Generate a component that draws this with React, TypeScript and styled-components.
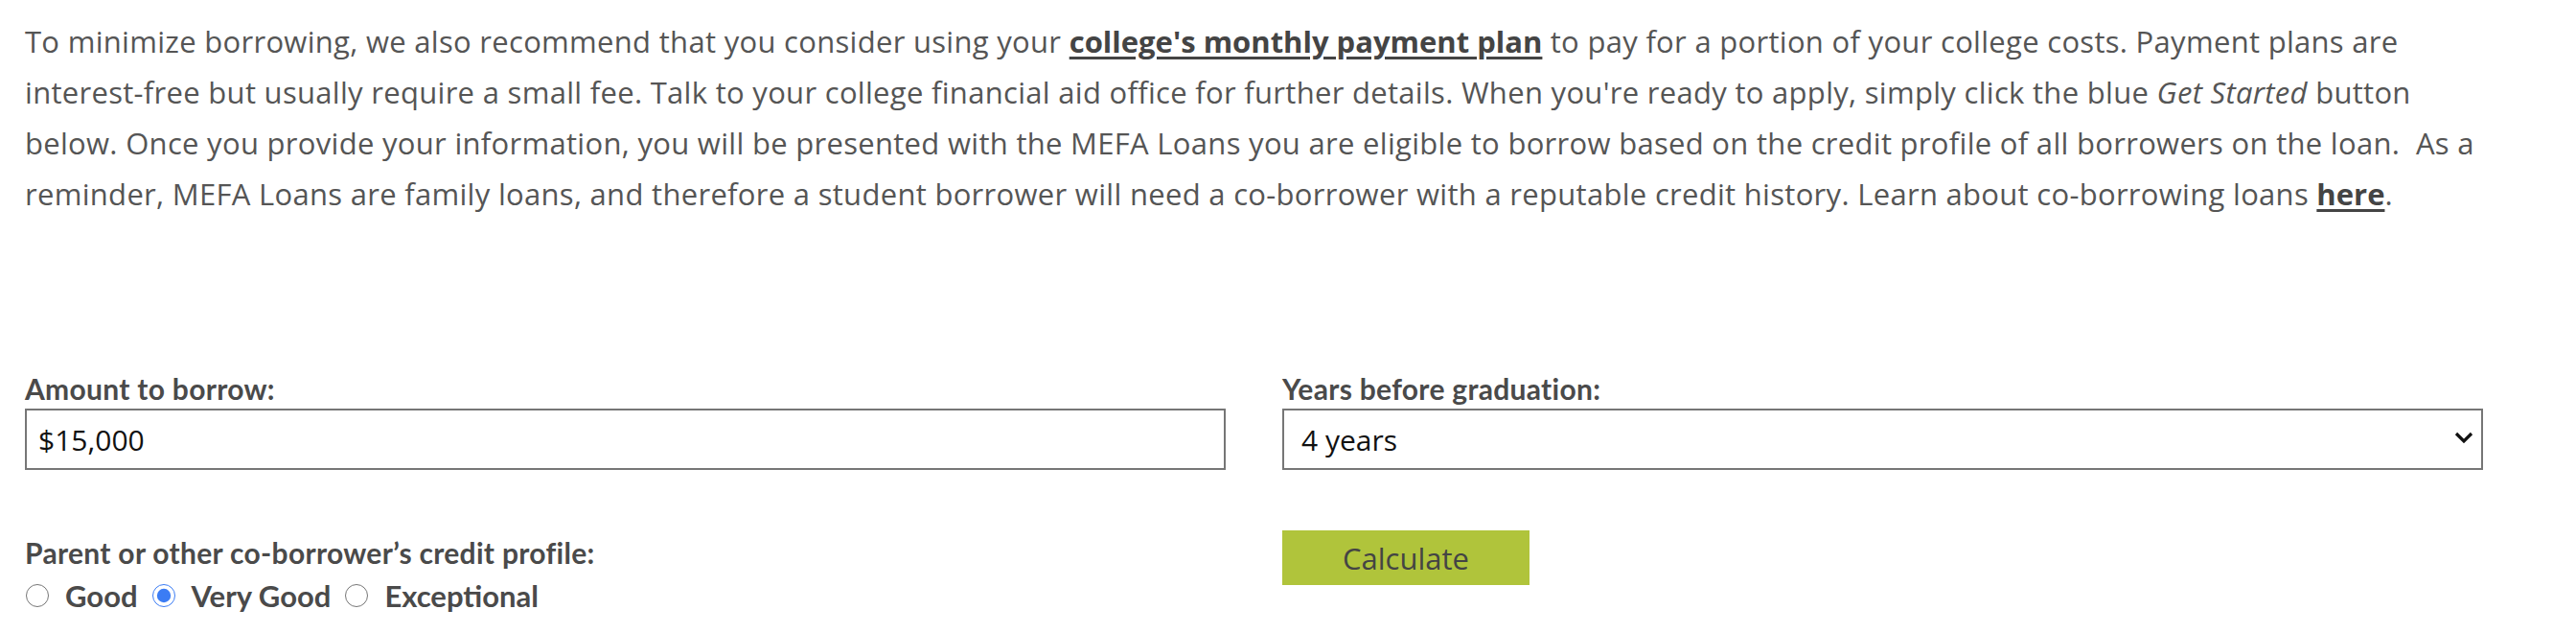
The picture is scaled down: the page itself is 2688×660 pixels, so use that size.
import React, { useState } from "react";
import styled, { createGlobalStyle } from "styled-components";

const GlobalStyle = createGlobalStyle`
  html, body {
    margin: 0;
    padding: 0;
    background: #ffffff;
  }
  body {
    font-family: "Open Sans", "Noto Sans", Arial, sans-serif;
    color: #555555;
  }
`;

const Page = styled.main`
  width: 2565px;
  padding: 17px 0 0 26px;
`;

const Intro = styled.p`
  margin: 0;
  font-size: 31px;
  line-height: 53px;
  letter-spacing: 0.3px;
  color: #555555;

  a {
    color: #444444;
    font-weight: 700;
    letter-spacing: 0;
    text-decoration: underline;
    text-underline-offset: 4px;
  }

  em {
    font-style: italic;
  }
`;

const Form = styled.form`
  display: grid;
  grid-template-columns: 1fr 1fr;
  column-gap: 59px;
  row-gap: 69px;
  margin-top: 159px;
`;

const Field = styled.div`
  display: flex;
  flex-direction: column;
`;

const Label = styled.label`
  font-family: Lato, "Open Sans", sans-serif;
  font-weight: 700;
  font-size: 30px;
  line-height: 34px;
  letter-spacing: 0.3px;
  color: #4a4a4a;
  margin-bottom: 4px;
`;

const TextInput = styled.input`
  box-sizing: border-box;
  height: 64px;
  width: 100%;
  border: 2px solid #767676;
  border-radius: 0;
  padding: 0 12px;
  font-family: "Open Sans", sans-serif;
  font-size: 30px;
  color: #111111;
  outline: none;
`;

const SelectWrap = styled.div`
  position: relative;
`;

const Select = styled.select`
  box-sizing: border-box;
  height: 64px;
  width: 100%;
  border: 2px solid #767676;
  border-radius: 0;
  padding: 0 18px;
  font-family: "Open Sans", sans-serif;
  font-size: 30px;
  color: #111111;
  background: #ffffff;
  appearance: none;
  outline: none;
`;

const Chevron = styled.svg`
  position: absolute;
  right: 10px;
  top: 24px;
  width: 20px;
  height: 13px;
  pointer-events: none;
`;

const RadioRow = styled.div`
  display: flex;
  align-items: center;
  margin-top: 5px;
`;

const RadioLabel = styled.label`
  display: inline-flex;
  align-items: center;
  font-family: Lato, "Open Sans", sans-serif;
  font-weight: 700;
  font-size: 31px;
  color: #4a4a4a;
  margin-right: 14px;
`;

const Radio = styled.input`
  width: 24px;
  height: 24px;
  margin: 0 17px 0 1px;
  accent-color: #3b7cf4;
`;

const CalcButton = styled.button`
  width: 258px;
  height: 57px;
  margin-top: -6px;
  border: none;
  border-radius: 0;
  background: #b0c43b;
  color: #444444;
  font-family: "Open Sans", sans-serif;
  font-size: 31px;
  cursor: pointer;
`;

const options = ["Good", "Very Good", "Exceptional"];

export default function App() {
  const [amount, setAmount] = useState("$15,000");
  const [years, setYears] = useState("4");
  const [profile, setProfile] = useState("Very Good");

  return (
    <Page>
      <GlobalStyle />
      <Intro>
        To minimize borrowing, we also recommend that you consider using your{" "}
        <a href="#plan">college's monthly payment plan</a> to pay for a portion
        of your college costs. Payment plans are interest-free but usually
        require a small fee. Talk to your college financial aid office for
        further details. When you're ready to apply, simply click the blue{" "}
        <em>Get Started</em> button below. Once you provide your information,
        you will be presented with the MEFA Loans you are eligible to borrow
        based on the credit profile of all borrowers on the loan.&nbsp; As a
        reminder, MEFA Loans are family loans, and therefore a student borrower
        will need a co-borrower with a reputable credit history. Learn about
        co-borrowing loans <a href="#here">here</a>.
      </Intro>

      <Form onSubmit={(e) => e.preventDefault()}>
        <Field>
          <Label htmlFor="amount">Amount to borrow:</Label>
          <TextInput
            id="amount"
            value={amount}
            onChange={(e) => setAmount(e.target.value)}
          />
        </Field>
        <Field>
          <Label htmlFor="years">Years before graduation:</Label>
          <SelectWrap>
            <Select
              id="years"
              value={years}
              onChange={(e) => setYears(e.target.value)}
            >
              <option value="1">1 year</option>
              <option value="2">2 years</option>
              <option value="3">3 years</option>
              <option value="4">4 years</option>
            </Select>
            <Chevron viewBox="0 0 20 13">
              <path
                d="M2 2 L10 10 L18 2"
                fill="none"
                stroke="#111"
                strokeWidth="3.2"
              />
            </Chevron>
          </SelectWrap>
        </Field>
        <Field>
          <Label as="span">Parent or other co-borrower’s credit profile:</Label>
          <RadioRow>
            {options.map((o) => (
              <RadioLabel key={o}>
                <Radio
                  type="radio"
                  name="profile"
                  checked={profile === o}
                  onChange={() => setProfile(o)}
                />
                {o}
              </RadioLabel>
            ))}
          </RadioRow>
        </Field>
        <Field>
          <CalcButton type="submit">Calculate</CalcButton>
        </Field>
      </Form>
    </Page>
  );
}
